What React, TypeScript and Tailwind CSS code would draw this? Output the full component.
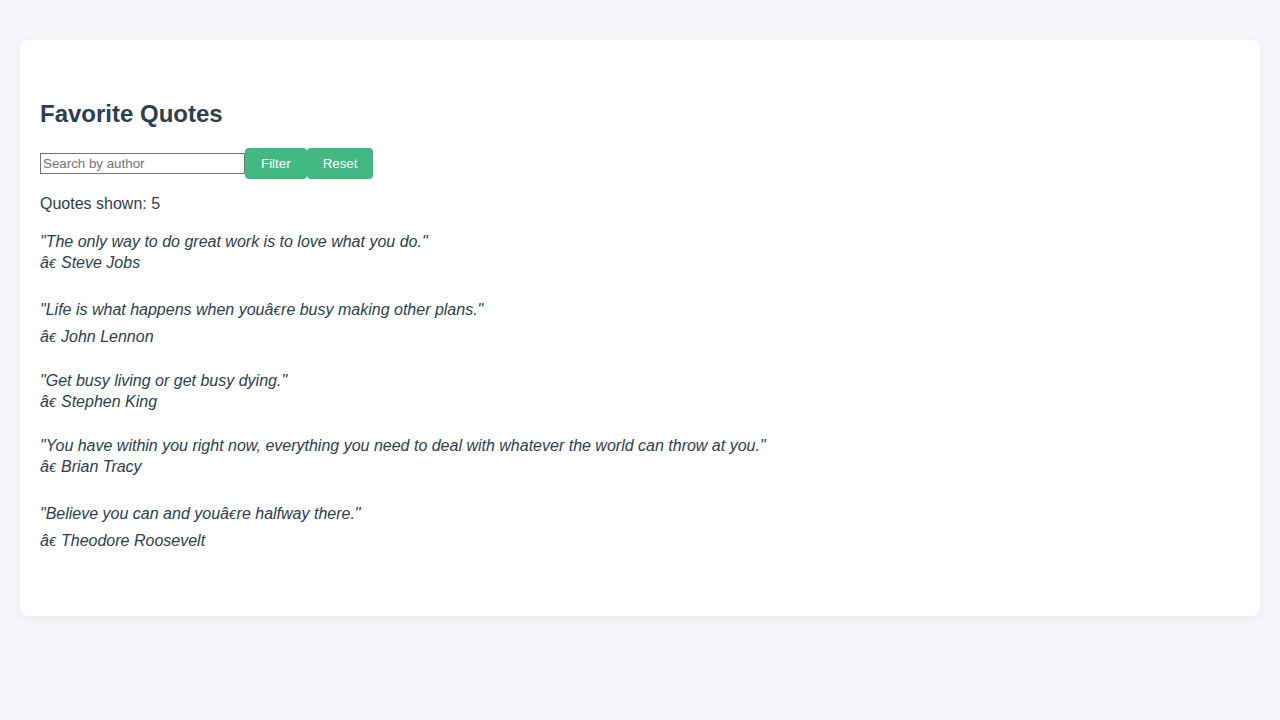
import React from "react";

const Euro = () => (
  <span className="text-[12px]" style={{ fontFamily: '"DejaVu Sans", sans-serif' }}>
    €
  </span>
);

type Q = { pre: string; post?: string; author: string; moji: boolean };

const quotes: Q[] = [
  { pre: "The only way to do great work is to love what you do.", author: "Steve Jobs", moji: false },
  { pre: "Life is what happens when youâ", post: "re busy making other plans.", author: "John Lennon", moji: true },
  { pre: "Get busy living or get busy dying.", author: "Stephen King", moji: false },
  {
    pre: "You have within you right now, everything you need to deal with whatever the world can throw at you.",
    author: "Brian Tracy",
    moji: false,
  },
  { pre: "Believe you can and youâ", post: "re halfway there.", author: "Theodore Roosevelt", moji: true },
];

export default function App() {
  return (
    <div
      className="min-h-[720px] bg-[#f5f6fa] px-5 pt-10 text-[#2c3e50]"
      style={{ fontFamily: '"Liberation Sans", Arial, sans-serif' }}
    >
      <div className="rounded-lg bg-white px-5 pt-[60px] pb-[65px] shadow-[0_2px_8px_rgba(0,0,0,0.06)]">
        <h2 className="text-[24px] font-bold leading-[28px]">Favorite Quotes</h2>
        <div className="mt-5 flex items-center">
          <input
            placeholder="Search by author"
            className="h-[21px] w-[205px] border border-[#767676] px-[2px] text-[13.333px] placeholder:text-[#757575]"
          />
          <button className="h-[31px] rounded bg-[#42b983] px-4 text-[13.333px] text-white">Filter</button>
          <button className="h-[31px] rounded bg-[#42b983] px-4 text-[13.333px] text-white">Reset</button>
        </div>
        <p className="mt-[14px] text-base leading-[21px]">Quotes shown: 5</p>
        <ul className="mt-[17px]">
          {quotes.map((q, i) => (
            <li
              key={q.author}
              className={`italic text-base leading-[21px] ${i === 0 ? "" : q.moji ? "mt-[26px]" : "mt-[23px]"}`}
            >
              <div className="h-[21px] whitespace-nowrap">
                "{q.pre}
                {q.post !== undefined && (
                  <>
                    <Euro />
                    {q.post}
                  </>
                )}
                "
              </div>
              <div className={`h-[21px] whitespace-nowrap ${q.moji ? "mt-[6px]" : ""}`}>
                â<Euro /> {q.author}
              </div>
            </li>
          ))}
        </ul>
      </div>
    </div>
  );
}
